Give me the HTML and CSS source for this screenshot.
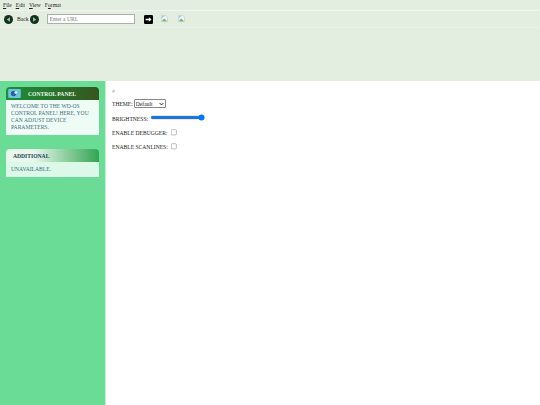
FILE: index.html
```html
<!DOCTYPE html>
<html lang="en">
<head>
    <meta charset="UTF-8">
    <title>WD-OS Control Panel</title>
    <link rel="stylesheet" href="styles.css">
</head>
<body>
    <div class="chrome">
        <div class="menubar">
            <span class="menu-item"><u>F</u>ile</span>
            <span class="menu-item"><u>E</u>dit</span>
            <span class="menu-item"><u>V</u>iew</span>
            <span class="menu-item">F<u>o</u>rmat</span>
        </div>
        <div class="toolbar">
            <svg class="nav-btn" viewBox="0 0 10 10">
                <circle cx="5" cy="5" r="5" fill="#17301f"/>
                <path d="M6.6 2.4 L3 5 L6.6 7.6 Z" fill="#7fd69a"/>
            </svg>
            <span class="back-label">Back</span>
            <svg class="nav-btn" viewBox="0 0 10 10">
                <circle cx="5" cy="5" r="5" fill="#17301f"/>
                <path d="M3.4 2.4 L7 5 L3.4 7.6 Z" fill="#7fd69a"/>
            </svg>
            <input class="url-input" type="text" placeholder="Enter a URL">
            <svg class="go-btn" viewBox="0 0 10 10">
                <rect width="10" height="10" rx="1.5" fill="#050505"/>
                <path d="M1.8 4.2 H5.4 V2.4 L8.4 5 L5.4 7.6 V5.8 H1.8 Z" fill="#fff"/>
            </svg>
            <svg class="broken-img" viewBox="0 0 8 8">
                <path d="M.5 .5 H5.5 L7.5 2.5 V7.5 H.5 Z" fill="#eef3f6" stroke="#a9b4bd" stroke-width=".5"/>
                <path d="M1 7 L3.5 4 L7 7 Z" fill="#6cb56c"/>
                <path d="M1 1 H4 L1 4 Z" fill="#a9c6ea"/>
            </svg>
            <svg class="broken-img img-last" viewBox="0 0 8 8">
                <path d="M.5 .5 H5.5 L7.5 2.5 V7.5 H.5 Z" fill="#eef3f6" stroke="#a9b4bd" stroke-width=".5"/>
                <path d="M1 7 L3.5 4 L7 7 Z" fill="#6cb56c"/>
                <path d="M1 1 H4 L1 4 Z" fill="#a9c6ea"/>
            </svg>
        </div>
    </div>

    <div class="main">
        <div class="sidebar">
            <div class="panel">
                <div class="panel-head head-dark">
                    <svg class="panel-icon" viewBox="0 0 14 10">
                        <rect width="14" height="10" rx="1" fill="#6cc4dc"/>
                        <circle cx="6" cy="5" r="3" fill="#2c5f9e"/>
                        <circle cx="8.5" cy="4" r="1.6" fill="#dfe9f2"/>
                    </svg>
                    <span class="panel-title">CONTROL PANEL</span>
                </div>
                <div class="panel-body body-light">WELCOME TO THE WD-OS CONTROL PANEL! HERE, YOU CAN ADJUST DEVICE PARAMETERS.</div>
            </div>
            <div class="panel">
                <div class="panel-head head-fade">
                    <span class="panel-title title-dark">ADDITIONAL</span>
                </div>
                <div class="panel-body body-mint">UNAVAILABLE.</div>
            </div>
        </div>
        <div class="content">
            <div class="hash">#</div>
            <div class="row row-theme">
                <label>THEME:</label>
                <select class="theme-select"><option>Default</option></select>
            </div>
            <div class="row">
                <label>BRIGHTNESS:</label>
                <input class="slider" type="range" min="0" max="100" value="100">
            </div>
            <div class="row">
                <label>ENABLE DEBUGGER:</label>
                <input class="check" type="checkbox">
            </div>
            <div class="row">
                <label>ENABLE SCANLINES:</label>
                <input class="check" type="checkbox">
            </div>
        </div>
    </div>
</body>
</html>
```

FILE: styles.css
```css
html, body {
    height: 100%;
}
body {
    margin: 0;
    display: flex;
    flex-direction: column;
    font-family: "Liberation Serif", serif;
    font-size: 5.6px;
    color: #222;
    background: #fff;
    overflow: hidden;
}
.chrome {
    height: 81px;
    flex-shrink: 0;
    background: #e4eee0;
}
.menubar {
    height: 10px;
    display: flex;
    align-items: center;
    gap: 4px;
    padding-left: 3px;
    border-bottom: 1px solid #f0f5ee;
}
.toolbar {
    height: 16px;
    display: flex;
    align-items: center;
    padding-left: 4px;
    border-bottom: 1px solid #eef3eb;
}
.nav-btn {
    width: 9px;
    height: 9px;
}
.back-label {
    margin: 0 1px 0 4px;
}
.url-input {
    width: 82px;
    height: 6px;
    margin-left: 8px;
    padding: 1px 2px;
    border: 1px solid #a9b3a4;
    background: #fff;
    font-family: inherit;
    font-size: 5.6px;
}
.url-input::placeholder {
    color: #777;
}
.go-btn {
    width: 9px;
    height: 9px;
    margin-left: 9px;
}
.broken-img {
    width: 7px;
    height: 7px;
    margin-left: 8px;
    margin-top: -2px;
}
.img-last {
    margin-left: 10px;
}
.main {
    flex: 1;
    display: flex;
}
.sidebar {
    width: 106px;
    flex-shrink: 0;
    padding: 6px 6px 0;
    box-sizing: border-box;
    background: #6bdc96;
    border-right: 1px solid #c5f2d5;
}
.panel {
    margin-bottom: 14px;
}
.panel-head {
    height: 13px;
    display: flex;
    align-items: center;
    border-radius: 4px 4px 0 0;
}
.head-dark {
    background: linear-gradient(to right, #1c8f3a, #35561f);
}
.head-fade {
    background: linear-gradient(to right, #e8f7ec, #e8f7ec 30%, #32a552);
}
.panel-icon {
    width: 13px;
    height: 9px;
    margin-left: 2px;
}
.panel-title {
    margin-left: 7px;
    font-weight: bold;
    color: #e9f7ea;
}
.title-dark {
    color: #1c3f55;
}
.panel-body {
    padding: 3px 5px 4px;
    line-height: 7px;
    color: #3f6d80;
}
.body-light {
    background: #effcf5;
}
.body-mint {
    padding-top: 4px;
    background: #dcf8e8;
}
.content {
    flex: 1;
    padding: 7px 6px;
}
.hash {
    color: #aaa;
    font-style: italic;
    margin-bottom: 5px;
}
.row {
    display: flex;
    align-items: center;
    height: 9px;
    margin-bottom: 5px;
}
.row-theme {
    margin-bottom: 6px;
}
.theme-select {
    appearance: none;
    width: 32px;
    height: 9px;
    margin: 0 0 0 1px;
    padding: 0 0 0 1px;
    border: 1px solid #888;
    border-radius: 1px;
    background: #fff url("data:image/svg+xml,%3Csvg xmlns='http://www.w3.org/2000/svg' viewBox='0 0 8 6'%3E%3Cpath d='M1 1.5 L4 4.5 L7 1.5' fill='none' stroke='%23222' stroke-width='1.6'/%3E%3C/svg%3E") no-repeat right 1px center / 5px 4px;
    font-family: inherit;
    font-size: 5.6px;
    color: #222;
}
.slider {
    zoom: 0.42;
    width: 130px;
    margin: -4px 0 0 5px;
}
.check {
    zoom: 0.47;
    margin: 0 0 0 7px;
}
```
